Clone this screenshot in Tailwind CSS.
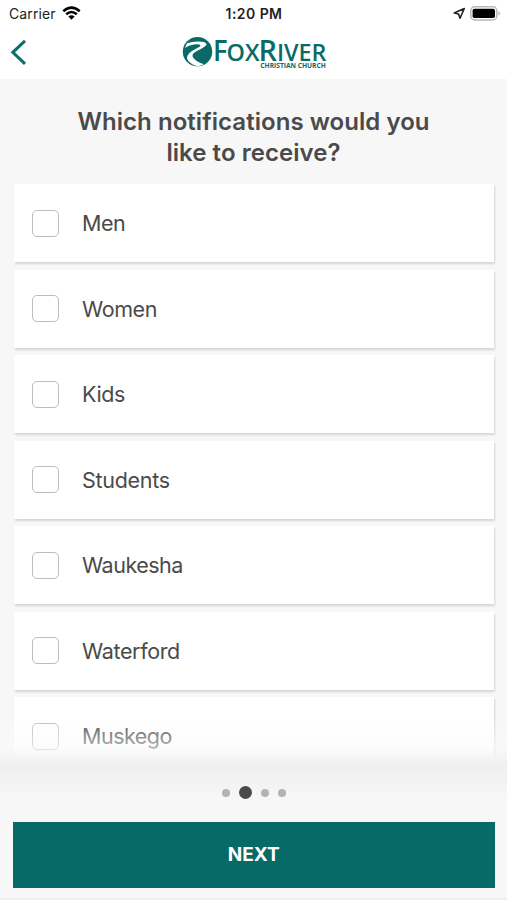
<!DOCTYPE html>
<html lang="en">
<head>
<meta charset="utf-8">
<meta name="viewport" content="width=device-width, initial-scale=1">
<title>Notifications</title>
<script src="https://cdn.jsdelivr.net/npm/@tailwindcss/browser@4"></script>
</head>
<body class="bg-[#f7f7f7] font-['Inter',sans-serif] text-[#4a4a4a]">
<div class="relative flex h-[900px] w-[507px] flex-col overflow-hidden">
  <header class="h-[79px] shrink-0 bg-white">
    <div class="grid h-[27px] grid-cols-[1fr_auto_1fr] items-center pr-[6px] pl-[7px] text-[#222]">
      <div class="flex items-center gap-[6px] pl-[2px] text-[14px] tracking-[0.1px]">
        <span>Carrier</span>
        <svg class="-mt-[2px] h-[14px] w-[19px]" viewBox="0 0 19 14" fill="none" stroke="#000" stroke-width="2.5"><path d="M1.3 5.2Q9.5-2 17.700 5.200"/><path d="M4.200 8.200Q9.500 3.700 14.800 8.200"/><path d="M6.400 10.600Q9.500 7.900 12.600 10.600L9.500 13.700Z" fill="#000" stroke="none"/></svg>
      </div>
      <div class="text-center text-[14px] font-semibold tracking-[0.45px] whitespace-nowrap">1:20 PM</div>
      <div class="flex items-center justify-end gap-[4px]">
        <svg class="h-[13px] w-[13px]" viewBox="0 0 13 13" fill="none" stroke="#222" stroke-width="1.6" stroke-linejoin="round"><path d="M11.300 1.500L1.200 6L5.600 7L7 11.200Z"/></svg>
        <svg class="-mt-[1px] h-[15px] w-[31px]" viewBox="0 0 31 15"><rect x=".8" y=".8" width="26" height="13.200" rx="4" fill="#fff" stroke="#b9b9b9" stroke-width="1.500"/><rect x="2.600" y="2.700" width="22.400" height="9.400" rx="1.800"/><path d="M28.400 5Q31.600 7.400 28.400 9.800Z" fill="#b5b5b5"/></svg>
      </div>
    </div>
    <div class="flex h-[52px]">
      <svg class="mt-[12px] ml-[10px] h-[28px] w-[18px]" viewBox="0 0 18 28" fill="none" stroke="#0b6e68" stroke-width="3"><path d="M15 1.800L2.800 13.300L15 24.800"/></svg>
      <svg class="mt-[8px] ml-[154px] h-[36px] w-[146px] overflow-visible font-['Open_Sans',sans-serif]" viewBox="182 35 146 36" fill="#0a6b66">
        <circle cx="197.500" cy="51.700" r="14.700"/>
        <path d="M187 43.300Q194 40.800 202 41.700Q208 42.600 206 45.500Q203 48.300 197 50.900Q191 53.500 193 57.500Q196.500 62 204 64.200L198 66.500Q188.500 63.500 187 58.500Q186.700 54.500 192 51L200 46.500Q201.500 44.600 197.500 44.300Q191 44 185 48Z" fill="#fff"/>
        <g font-weight="600">
          <text x="213" y="61" font-size="28.500" textLength="14.500" lengthAdjust="spacingAndGlyphs">F</text>
          <text x="226.500" y="61" font-size="23" textLength="33" lengthAdjust="spacingAndGlyphs">OX</text>
          <text x="258.500" y="61" font-size="28.500" textLength="18.500" lengthAdjust="spacingAndGlyphs">R</text>
          <text x="277" y="61" font-size="23" textLength="49.500" lengthAdjust="spacingAndGlyphs">IVER</text>
        </g>
        <text x="260.300" y="67.500" font-size="6.400" font-weight="700" textLength="65.500" lengthAdjust="spacingAndGlyphs">CHRISTIAN CHURCH</text>
      </svg>
    </div>
  </header>

  <h1 class="mt-[27px] shrink-0 text-center text-[24px] leading-[31px] font-semibold tracking-[0.05px]">Which notifications would you<br>like to receive?</h1>

  <main class="mt-[16px] flex h-[576px] shrink-0 flex-col gap-[7.5px] overflow-hidden pr-[13.5px] pl-[14px]">
    <label class="flex h-[78px] shrink-0 items-center bg-white pl-[18px] shadow-[1px_2px_2px_#0002]"><input type="checkbox" class="h-[27px] w-[27px] appearance-none rounded-[5px] border-[1.5px] border-[#bdbdbd] bg-white"><span class="ml-[23px] text-[21.5px] tracking-[-0.5px]">Men</span></label>
    <label class="flex h-[78px] shrink-0 items-center bg-white pl-[18px] shadow-[1px_2px_2px_#0002]"><input type="checkbox" class="h-[27px] w-[27px] appearance-none rounded-[5px] border-[1.5px] border-[#bdbdbd] bg-white"><span class="ml-[23px] pt-[1px] text-[21.5px] tracking-[-0.4px]">Women</span></label>
    <label class="flex h-[78px] shrink-0 items-center bg-white pl-[18px] shadow-[1px_2px_2px_#0002]"><input type="checkbox" class="h-[27px] w-[27px] appearance-none rounded-[5px] border-[1.5px] border-[#bdbdbd] bg-white"><span class="ml-[23px] text-[21.5px] tracking-[-0.4px]">Kids</span></label>
    <label class="flex h-[78px] shrink-0 items-center bg-white pl-[18px] shadow-[1px_2px_2px_#0002]"><input type="checkbox" class="h-[27px] w-[27px] appearance-none rounded-[5px] border-[1.5px] border-[#bdbdbd] bg-white"><span class="ml-[23px] pt-[1px] text-[21.5px] tracking-[-0.3px]">Students</span></label>
    <label class="flex h-[78px] shrink-0 items-center bg-white pl-[18px] shadow-[1px_2px_2px_#0002]"><input type="checkbox" class="h-[27px] w-[27px] appearance-none rounded-[5px] border-[1.5px] border-[#bdbdbd] bg-white"><span class="ml-[23px] text-[21.5px] tracking-[-0.5px]">Waukesha</span></label>
    <label class="flex h-[78px] shrink-0 items-center bg-white pl-[18px] shadow-[1px_2px_2px_#0002]"><input type="checkbox" class="h-[27px] w-[27px] appearance-none rounded-[5px] border-[1.5px] border-[#bdbdbd] bg-white"><span class="ml-[23px] pt-[1px] text-[21.5px] tracking-[-0.35px]">Waterford</span></label>
    <label class="flex h-[78px] shrink-0 items-center bg-white pl-[18px] shadow-[1px_2px_2px_#0002]"><input type="checkbox" class="h-[27px] w-[27px] appearance-none rounded-[5px] border-[1.5px] border-[#bdbdbd] bg-white"><span class="ml-[23px] text-[21.5px] tracking-[-0.5px]">Muskego</span></label>
  </main>
  <div class="pointer-events-none absolute top-[712px] left-0 h-[48px] w-full bg-linear-to-b from-[#f8f8f8]/0 from-10% via-[#fafafa]/60 via-75% to-[#f3f3f3]"></div>

  <footer class="flex h-[140px] shrink-0 flex-col bg-linear-to-b from-[#f2f2f2] via-[#efefef] via-4% to-[#f7f7f7] to-28% pr-[12.5px] pl-[13px]">
    <div class="mt-[26px] ml-[1px] flex h-[13px] items-center justify-center gap-[10px]">
      <span class="h-[8px] w-[8px] rounded-full bg-[#b3b3b3]"></span>
      <span class="-mx-[1px] h-[13px] w-[13px] rounded-full bg-[#4a4a4a]"></span>
      <span class="h-[8px] w-[8px] rounded-full bg-[#b3b3b3]"></span>
      <span class="-ml-[1px] h-[8px] w-[8px] rounded-full bg-[#b3b3b3]"></span>
    </div>
    <button class="mt-[23px] h-[66px] shrink-0 bg-[#086a67] pt-[1px] text-[19px] font-bold text-white">NEXT</button>
    <div class="-mx-[13px] mt-auto h-[2px] bg-[#efefef]"></div>
  </footer>
</div>
</body>
</html>
